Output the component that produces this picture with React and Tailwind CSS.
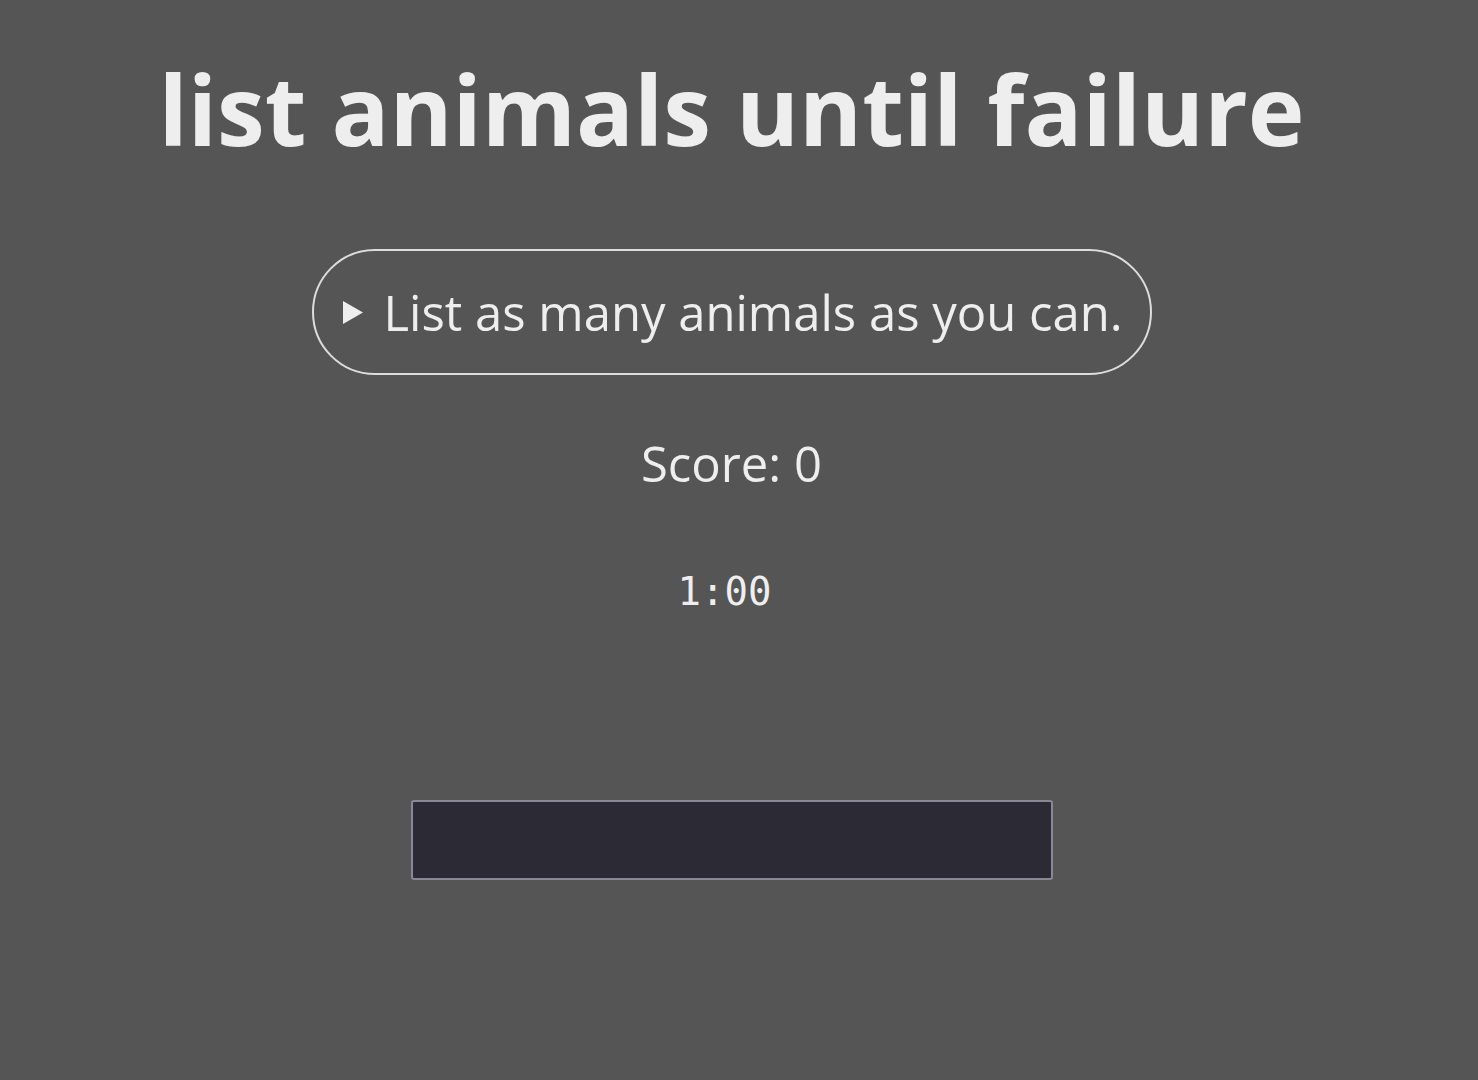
import { useState } from "react";

function App() {
    const [open, setOpen] = useState(false);

    return (
        <div className="min-h-screen w-full bg-[#555555] text-[#eeeeee] font-['Open_Sans',sans-serif]">
            <div className="w-[1463px] flex flex-col items-center">
                <h1 className="mt-[47px] text-[96px] leading-[124px] font-bold">
                    list animals until failure
                </h1>

                {/* instructions */}
                <div
                    onClick={() => setOpen(!open)}
                    className="mt-[78px] h-[126px] w-[840px] flex items-center gap-[20px] pl-[28px] pr-[20px] border-2 border-[#dddddd] rounded-[64px] cursor-pointer"
                >
                    <svg width="22" height="25" viewBox="0 0 22 25" className="shrink-0">
                        <path d="M1 1 L21 12.5 L1 24 Z" fill="#eeeeee" />
                    </svg>
                    <span className="text-[49px] leading-none whitespace-nowrap">List as many animals as you can.</span>
                </div>

                <div className="mt-[56px] text-[49px] leading-[64px]">Score: 0</div>

                <div className="mt-[73px] pr-[14px] font-['DejaVu_Sans_Mono',monospace] text-[39px] leading-[48px]">1:00</div>

                <input
                    type="text"
                    className="mt-[184px] w-[642px] h-[80px] bg-[#2b2a35] border-2 border-[#8a8898] rounded-[3px] outline-none px-3 text-[40px] text-[#eeeeee]"
                />
            </div>
        </div>
    );
}

export default App;
